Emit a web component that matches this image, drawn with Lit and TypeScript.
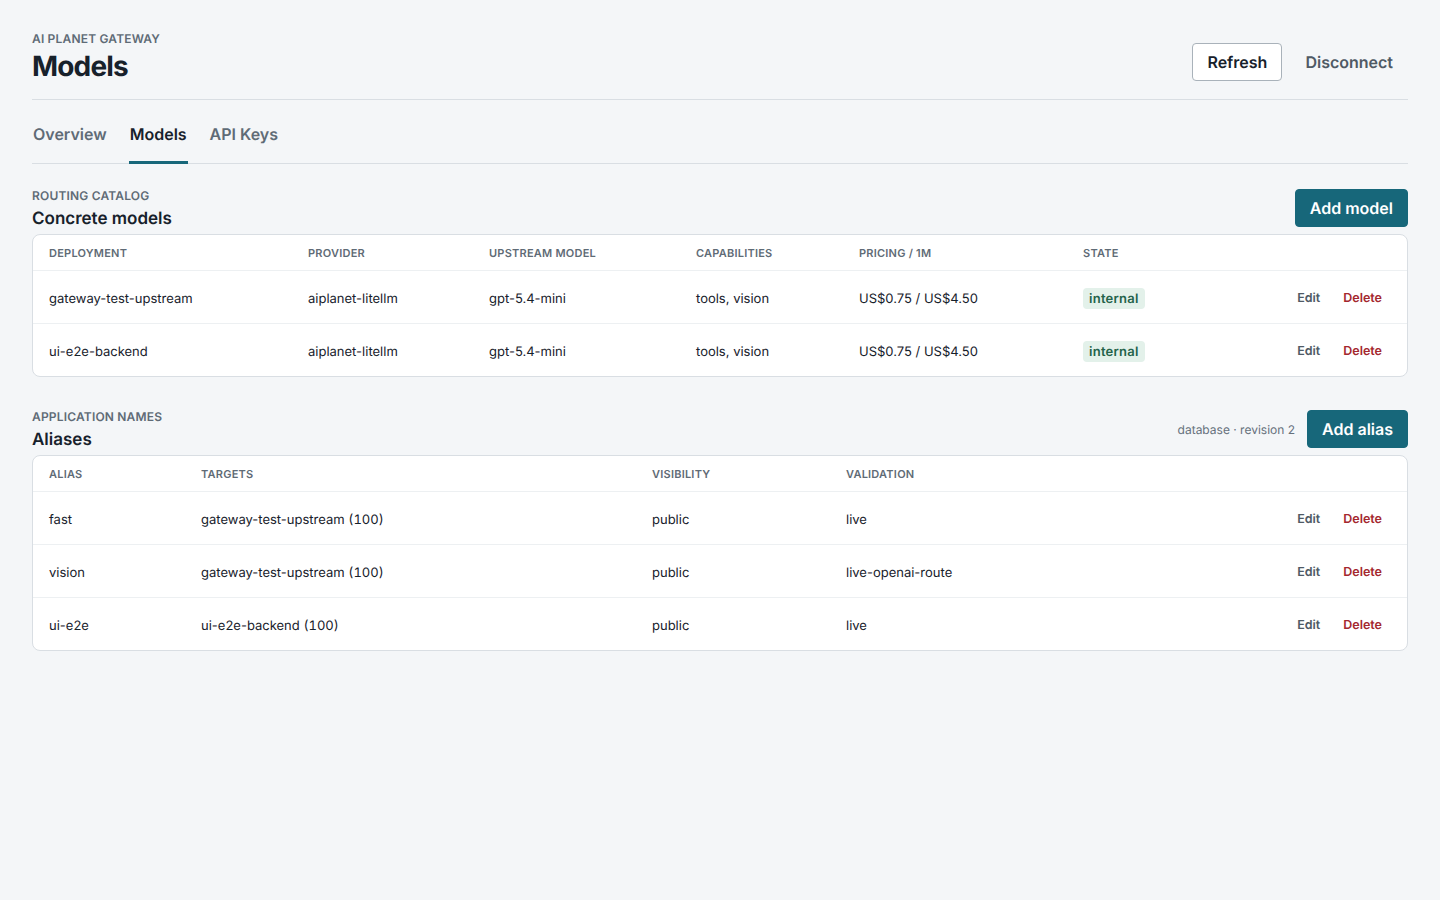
import { LitElement, html, css } from "lit";
import { customElement } from "lit/decorators.js";

const models = [
  ["gateway-test-upstream", "aiplanet-litellm", "gpt-5.4-mini", "tools, vision", "US$0.75 / US$4.50"],
  ["ui-e2e-backend", "aiplanet-litellm", "gpt-5.4-mini", "tools, vision", "US$0.75 / US$4.50"],
];
const aliases = [
  { alias: "fast", target: "gateway-test-upstream", weight: "(100)", vis: "public", val: "live" },
  { alias: "vision", target: "gateway-test-upstream", weight: "(100)", vis: "public", val: "live-openai-route" },
  { alias: "ui-e2e", target: "ui-e2e-backend", weight: "(100)", vis: "public", val: "live" },
];

@customElement("app-root")
export class AppRoot extends LitElement {
  static styles = css`
    :host {
      display: block;
      min-height: 900px;
      box-sizing: border-box;
      background: #f4f6f8;
      color: #17212b;
      font-family: Inter, "Liberation Sans", sans-serif;
      text-rendering: geometricPrecision;
      padding: 32px 32px 0;
    }
    * { box-sizing: border-box; }
    button { font-family: inherit; cursor: pointer; text-rendering: geometricPrecision; }
    .top {
      display: flex;
      justify-content: space-between;
      align-items: flex-start;
      height: 68px;
      border-bottom: 1px solid #d9dee3;
    }
    .eyebrow {
      font-size: 12px;
      line-height: 13px;
      font-weight: 600;
      letter-spacing: 0.18px;
      color: #5f6b76;
      text-transform: uppercase;
    }
    h1 {
      margin: 4px 0 0;
      font-size: 28px;
      line-height: 34px;
      font-weight: 700;
      letter-spacing: -0.84px;
      color: #17212b;
    }
    .top-actions { display: flex; align-items: center; gap: 8px; margin-top: 11px; }
    .btn {
      height: 38px;
      border-radius: 4px;
      font-size: 16px;
      font-weight: 600;
      padding: 0 14px;
      border: 1px solid transparent;
      background: transparent;
    }
    .btn.outline { background: #fff; border-color: #a9b2ba; color: #17212b; }
    .btn.ghost { color: #4f5a65; }
    .btn.primary { background: #17677a; color: #fff; border-color: #17677a; }
    .tabs {
      display: flex;
      gap: 21px;
      height: 64px;
      border-bottom: 1px solid #d9dee3;
    }
    .tab {
      display: flex;
      align-items: center;
      padding: 6px 1px 0;
      font-size: 16px;
      font-weight: 600;
      color: #5f6b76;
      margin-bottom: -1px;
      border-bottom: 3px solid transparent;
    }
    .tab.active { color: #17212b; border-bottom-color: #17677a; }
    .section-head {
      display: flex;
      justify-content: space-between;
      align-items: flex-start;
      height: 45px;
    }
    .first { margin-top: 25px; }
    .second { margin-top: 33px; }
    .section-head h2 {
      margin: 6px 0 0;
      font-size: 17px;
      line-height: 22px;
      font-weight: 600;
      color: #17212b;
    }
    .head-right { display: flex; align-items: center; gap: 12px; }
    .meta { font-size: 12px; color: #66717c; }
    .card {
      background: #fff;
      border: 1px solid #d9dee3;
      border-radius: 8px;
      overflow: hidden;
    }
    table {
      width: 100%;
      border-collapse: separate;
      border-spacing: 0;
      table-layout: fixed;
    }
    th {
      height: 36px;
      padding: 0 16px;
      text-align: left;
      font-size: 11px;
      font-weight: 600;
      letter-spacing: 0.23px;
      color: #5f6b76;
      text-transform: uppercase;
      border-bottom: 1px solid #edf0f2;
    }
    td {
      height: 53px;
      padding: 4px 16px 0;
      font-size: 13px;
      color: #17212b;
      border-bottom: 1px solid #edf0f2;
      white-space: nowrap;
    }
    tr:last-child td { border-bottom: 0; height: 52px; }
    td.state { padding-top: 2px; }
    .num { font-variant-numeric: tabular-nums; }
    .badge {
      display: inline-block;
      padding: 3px 6px 1px;
      border-radius: 4px;
      background: #e3f1ea;
      color: #24634a;
      font-size: 13px;
      line-height: 17px;
      font-weight: 600;
      letter-spacing: 0.26px;
    }
    .actions { text-align: right; padding-right: 25px; }
    .link {
      border: 0;
      background: none;
      padding: 0;
      font-size: 12.5px;
      font-weight: 600;
      color: #4f5a65;
      position: relative;
      top: -1px;
    }
    .link.danger { color: #a4282e; margin-left: 23px; }
    .w1 { width: 259px; } .w2 { width: 181px; } .w3 { width: 207px; }
    .w4 { width: 163px; } .w5 { width: 224px; } .w6 { width: 140px; }
    .a1 { width: 152px; } .a2 { width: 451px; } .a3 { width: 194px; }
  `;

  private actions() {
    return html`<td class="actions"><button class="link">Edit</button><button class="link danger">Delete</button></td>`;
  }

  render() {
    return html`
      <header class="top">
        <div>
          <div class="eyebrow">AI Planet Gateway</div>
          <h1>Models</h1>
        </div>
        <div class="top-actions">
          <button class="btn outline">Refresh</button>
          <button class="btn ghost">Disconnect</button>
        </div>
      </header>
      <nav class="tabs">
        <div class="tab">Overview</div>
        <div class="tab active">Models</div>
        <div class="tab">API Keys</div>
      </nav>

      <section class="first">
        <div class="section-head">
          <div>
            <div class="eyebrow">Routing catalog</div>
            <h2>Concrete models</h2>
          </div>
          <div class="head-right"><button class="btn primary">Add model</button></div>
        </div>
        <div class="card">
          <table>
            <colgroup>
              <col class="w1" /><col class="w2" /><col class="w3" /><col class="w4" /><col class="w5" /><col class="w6" /><col />
            </colgroup>
            <thead>
              <tr><th>Deployment</th><th>Provider</th><th>Upstream model</th><th>Capabilities</th><th>Pricing / 1M</th><th>State</th><th></th></tr>
            </thead>
            <tbody>
              ${models.map(
                (r) => html`<tr>
                  ${r.map((c) => html`<td>${c}</td>`)}
                  <td class="state"><span class="badge">internal</span></td>
                  ${this.actions()}
                </tr>`
              )}
            </tbody>
          </table>
        </div>
      </section>

      <section class="second">
        <div class="section-head">
          <div>
            <div class="eyebrow">Application names</div>
            <h2>Aliases</h2>
          </div>
          <div class="head-right">
            <span class="meta">database · revision 2</span>
            <button class="btn primary">Add alias</button>
          </div>
        </div>
        <div class="card">
          <table>
            <colgroup><col class="a1" /><col class="a2" /><col class="a3" /><col /><col class="w6" /></colgroup>
            <thead>
              <tr><th>Alias</th><th>Targets</th><th>Visibility</th><th>Validation</th><th></th></tr>
            </thead>
            <tbody>
              ${aliases.map(
                (r) => html`<tr>
                  <td>${r.alias}</td>
                  <td>${r.target} <span class="num">${r.weight}</span></td>
                  <td>${r.vis}</td>
                  <td>${r.val}</td>
                  ${this.actions()}
                </tr>`
              )}
            </tbody>
          </table>
        </div>
      </section>
    `;
  }
}
